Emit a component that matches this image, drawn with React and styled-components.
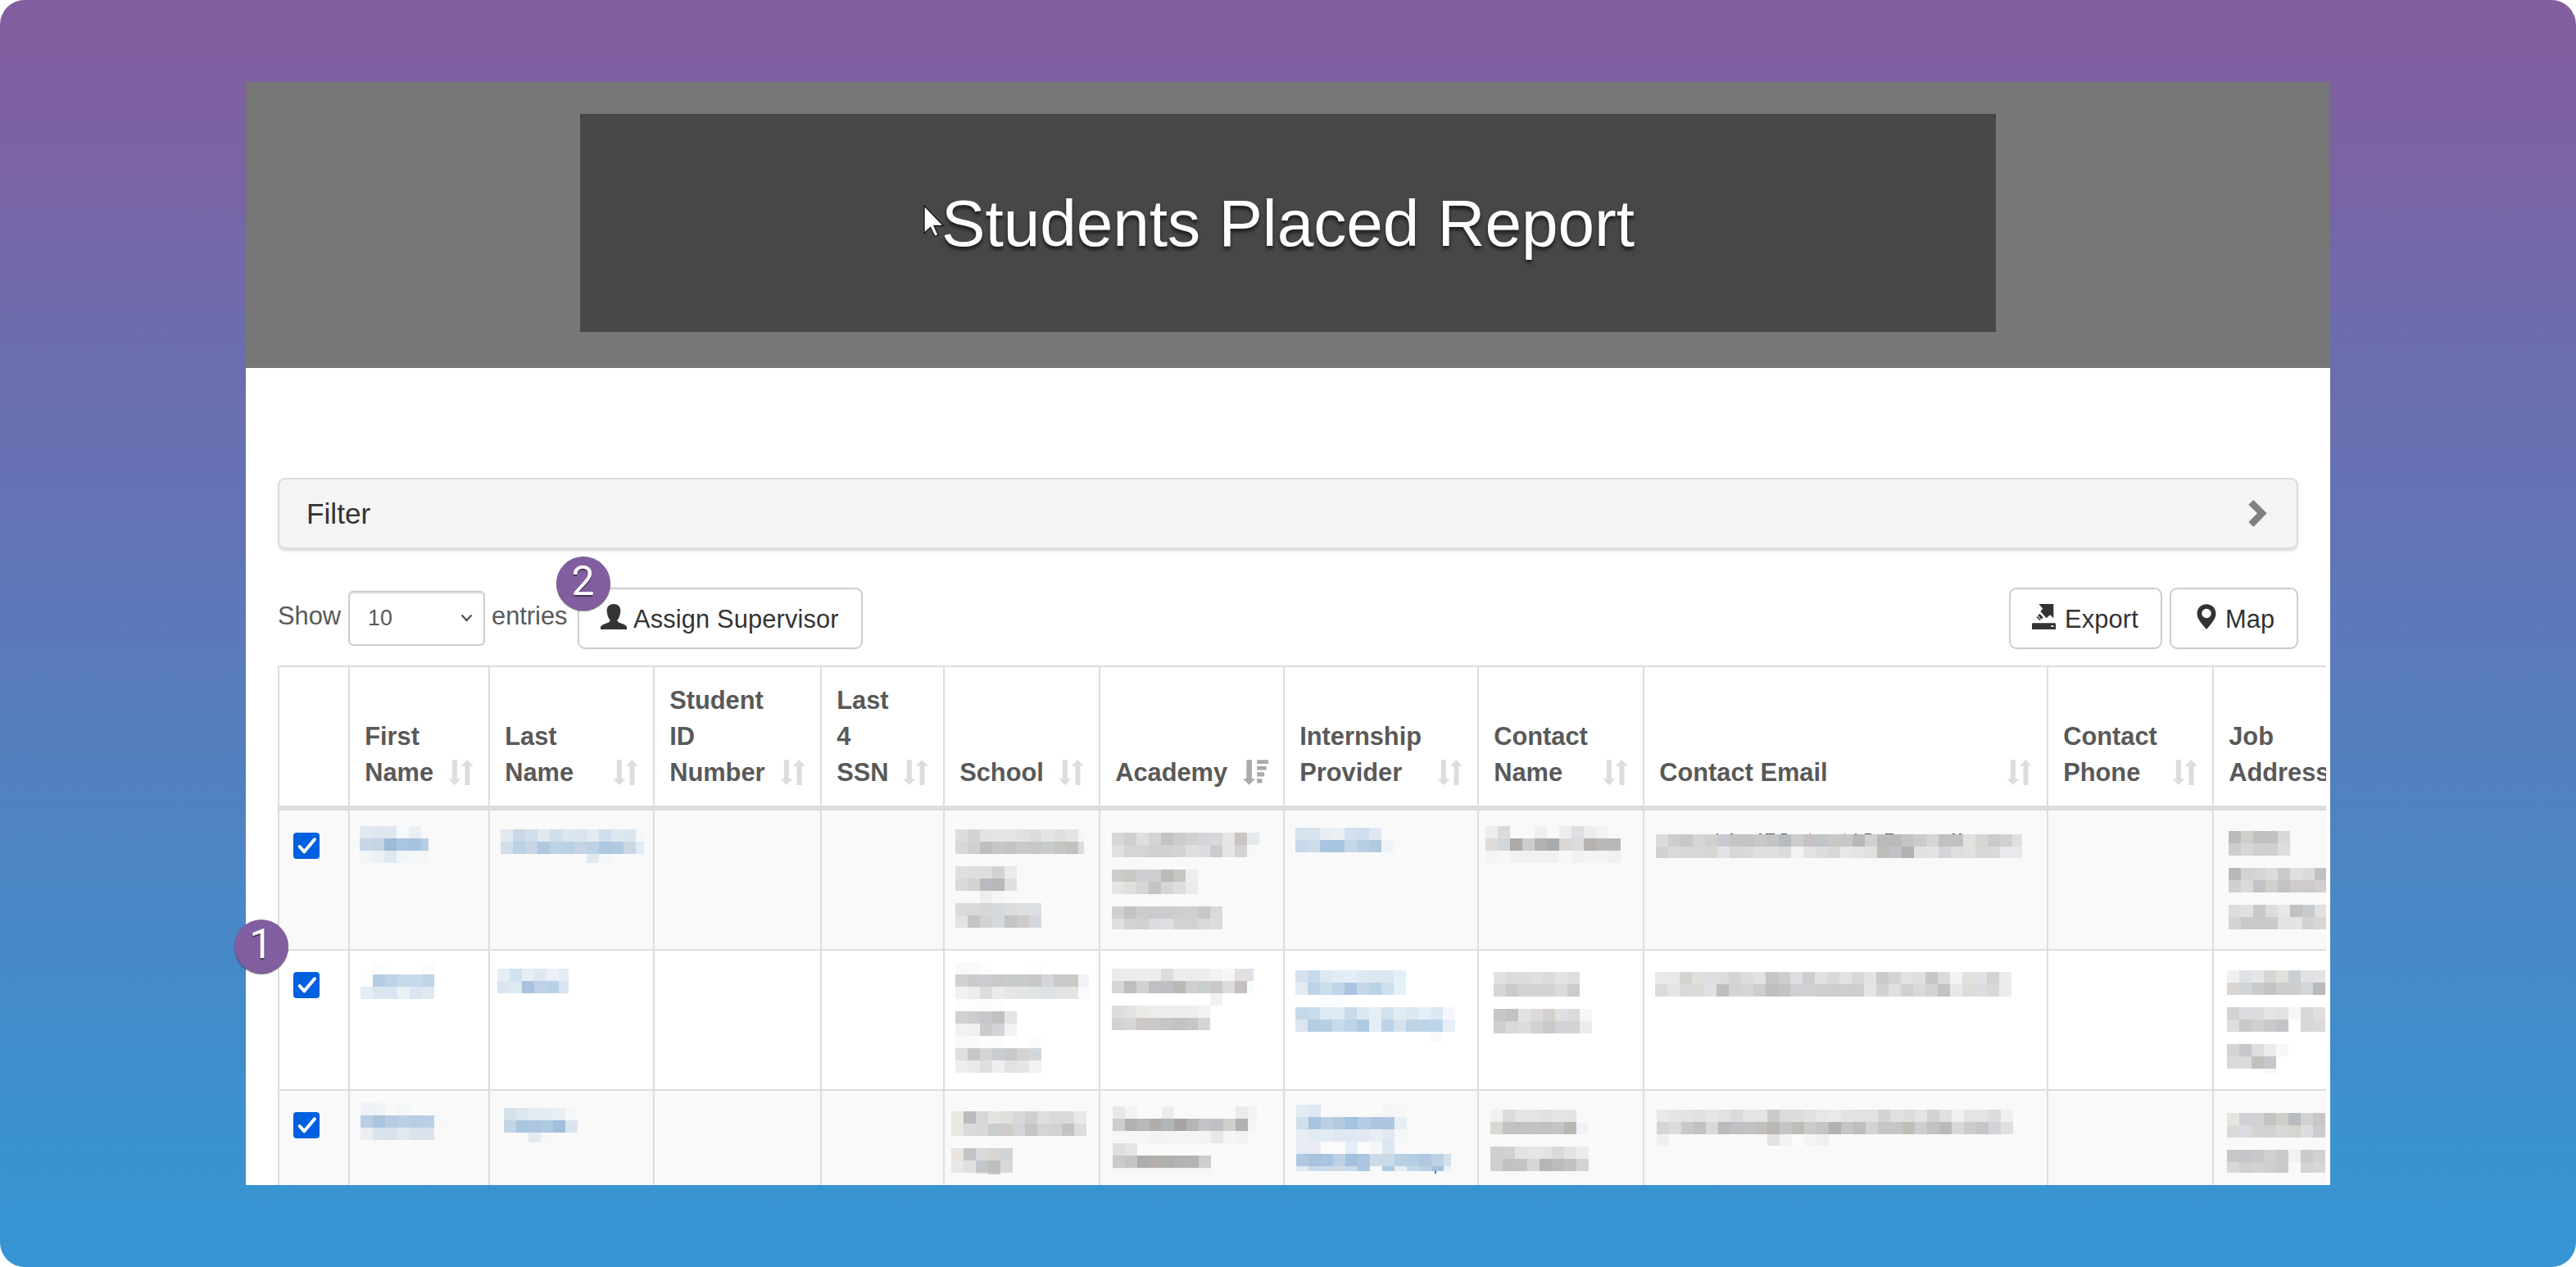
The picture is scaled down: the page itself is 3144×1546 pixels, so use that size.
import React from "react";
import styled, { createGlobalStyle } from "styled-components";

const GlobalStyle = createGlobalStyle`
  * { box-sizing: border-box; }
  body {
    margin: 0;
    background: #fff;
    font-family: "Liberation Sans", Arial, Helvetica, sans-serif;
    font-size: 30.8px;
    line-height: 44px;
    color: #595959;
  }
`;

const Backdrop = styled.div`
  position: relative;
  width: 3144px;
  height: 1546px;
  padding: 100px 300px;
  border-radius: 30px;
  background: linear-gradient(
    #835ea0 0,
    #7b63a4 200px,
    #6b6dae 430px,
    #6672b4 600px,
    #4f83c2 1000px,
    #3a92d0 1400px,
    #3796d4 1546px
  );
`;

const Card = styled.main`
  width: 2544px;
  height: 1346px;
  overflow: hidden;
  background: #fff;
`;

const Banner = styled.header`
  display: flex;
  justify-content: center;
  height: 349px;
  padding-top: 39px;
  background: #777;
`;

const Title = styled.h1`
  display: flex;
  align-items: center;
  justify-content: center;
  width: 1728px;
  height: 266px;
  margin: 0;
  background: #474747;
  color: #fff;
  font-size: 80.1px;
  font-weight: 400;
  line-height: 90px;
  text-shadow: 0 4px 4px rgba(0, 0, 0, 0.6);
`;

const Content = styled.section`
  padding: 134px 0 0 39px;
`;

const FilterPanel = styled.div`
  display: flex;
  align-items: center;
  justify-content: space-between;
  width: 2466px;
  height: 87px;
  padding: 0 36px 0 33px;
  border: 2px solid #ddd;
  border-radius: 9px;
  background: #f4f4f4;
  box-shadow: 0 1px 0 #ddd, 0 3px 3px rgba(0, 0, 0, 0.1);
  color: #333;
  font-size: 35.2px;
`;

const Toolbar = styled.div`
  display: flex;
  align-items: center;
  width: 2466px;
  height: 75px;
  margin: 47px 0 20px;
`;

const Label = styled.span`
  position: relative;
  top: -3px;
  width: ${({ w }) => w}px;
`;

const LengthSelect = styled.div`
  display: flex;
  align-items: center;
  justify-content: space-between;
  width: 167px;
  height: 67px;
  margin-right: 8px;
  padding: 0 13px 1px 22px;
  border: 2px solid #ccc;
  border-radius: 6px;
  box-shadow: inset 0 2px 2px rgba(0, 0, 0, 0.08);
  font-size: 26.8px;
`;

const Button = styled.button`
  display: flex;
  align-items: center;
  width: ${({ w }) => w}px;
  height: 75px;
  margin-left: ${({ ml }) => ml || "0"};
  padding: 2px 0 0 ${({ pl }) => pl}px;
  border: 2px solid #ccc;
  border-radius: 9px;
  background: #fff;
  color: #333;
  font: inherit;
  letter-spacing: 0.15px;
  white-space: nowrap;

  svg {
    margin: -6px ${({ gap }) => gap}px 0 0;
  }
`;

const TableClip = styled.div`
  width: 2500px;
  overflow: hidden;
`;

const Table = styled.table`
  table-layout: fixed;
  width: 2565px;
  border-top: 2px solid #ddd;
  border-left: 2px solid #ddd;
  border-collapse: separate;
  border-spacing: 0;
`;

const Th = styled.th`
  height: 175px;
  padding: 0 18px 18px 18.2px;
  border-right: 2px solid #ddd;
  border-bottom: 6px solid #ddd;
  text-align: left;
  vertical-align: bottom;
  white-space: pre;
`;

const ThInner = styled.div`
  display: flex;
  align-items: flex-end;
  justify-content: space-between;

  svg {
    flex: none;
    margin-bottom: 7px;
  }
`;

const Tr = styled.tr`
  background: #fff;

  &:nth-child(odd) {
    background: #f9f9f9;
  }
`;

const Td = styled.td`
  height: 171px;
  padding: 0;
  border-right: 2px solid #ddd;
  border-bottom: 2px solid #ddd;
  vertical-align: top;
`;

const CheckMark = styled.span`
  display: block;
  width: 32px;
  height: 32px;
  margin: 26px 0 0 17px;
  border-radius: 4px;
  background: #0060df;

  ${Tr}:first-child & {
    margin-top: 27px;
  }

  svg {
    display: block;
  }
`;

const MosaicSvg = styled.svg`
  display: block;
  margin: ${({ $y }) => $y}px 0 0 ${({ $x }) => $x}px;
  overflow: hidden;
`;

const StepBadge = styled.div`
  position: absolute;
  left: ${({ x }) => x}px;
  top: ${({ y }) => y}px;
  width: 66px;
  height: 66px;
  border-radius: 50%;
  background: #805ea0;
  box-shadow: 0 1px 1px rgba(0, 0, 0, 0.5);
  color: #fff;
  font-family: Roboto, "Liberation Sans", sans-serif;
  font-size: 50px;
  line-height: 60px;
  text-align: center;
  text-shadow: 0 2px 1px rgba(0, 0, 0, 0.45);
`;

const Pointer = styled.svg`
  position: absolute;
  left: 1126px;
  top: 249px;
`;

// icons
const ChevronRight = () => (
  <svg width="23" height="33" viewBox="0 0 67 99">
    <path d="M18 0 67 49 18 99 0 81 32 49 0 17z" fill="#808080" />
  </svg>
);

const SelectArrow = () => (
  <svg width="15" height="10" viewBox="0 0 15 10">
    <path d="M1.5 1.5 7.5 8 13.5 1.5" fill="none" stroke="#555" strokeWidth="2.4" />
  </svg>
);

const UserIcon = () => (
  <svg width="32" height="31" viewBox="0 0 96 93">
    <path
      d="M48 0c15 0 25 9 25 24 0 16-6 28-12 36 2 8 10 9 20 13 9 4 15 7 15 13v7H0v-7c0-6 6-9 15-13 10-4 18-5 20-13-6-8-12-20-12-36C23 9 33 0 48 0z"
      fill="#333"
    />
  </svg>
);

const ExportIcon = () => (
  <svg width="29" height="31" viewBox="0 0 87 93">
    <path d="M25 0h54v52L66 40 53 52 31 27 40 17z" fill="#333" />
    <path d="M28 35 41 49 34 56 22 42zM20 45 32 58 29 61 16 48z" fill="#333" />
    <path
      d="M3 70h81q3 0 3 3v20H0V73q0-3 3-3zM70 79v5h9v-5z"
      fill="#333"
      fillRule="evenodd"
    />
  </svg>
);

const MapIcon = () => (
  <svg width="24" height="31" viewBox="0 0 70 92">
    <path
      d="M35 1c20 0 34 15 34 34 0 20-18 38-34 57C19 73 1 55 1 35 1 16 15 1 35 1zm0 16a17 17 0 1 0 0 34 17 17 0 0 0 0-34z"
      fill="#333"
      fillRule="evenodd"
    />
  </svg>
);

const SortIcon = () => (
  <svg width="31" height="31" viewBox="0 0 92 93">
    <path d="M14 0h18v70h14L23 93 0 70h14zM69 0 92 23H79v70H61V23H47z" fill="#ddd" />
  </svg>
);

const SortDescIcon = () => (
  <svg width="31" height="31" viewBox="0 0 94 93">
    <path
      d="M13 0h20v70h13L23 93 0 70h13zM52 0h42v15H52zM52 24h35v14H52zM52 46h27v16H52zM52 70h19v16H52z"
      fill="#aaa"
    />
  </svg>
);

// Columns: width and heading
const columns = [
  { w: 86 },
  { w: 171, title: "First\nName", sort: "both" },
  { w: 201, title: "Last\nName", sort: "both" },
  { w: 204, title: "Student\nID\nNumber", sort: "both" },
  { w: 150, title: "Last\n4\nSSN", sort: "both" },
  { w: 190, title: "School", sort: "both" },
  { w: 225, title: "Academy", sort: "desc" },
  { w: 237, title: "Internship\nProvider", sort: "both" },
  { w: 202, title: "Contact\nName", sort: "both" },
  { w: 493, title: "Contact Email", sort: "both" },
  { w: 202, title: "Contact\nPhone", sort: "both" },
  { w: 202, title: "Job\nAddress", sort: "both" },
];

// Masked values: 15px tiles, one string per tile row, "-" leaves a hole
const rows = [
  [
    { x: 12, y: 19, w: 84, h: 45, t: [
      "e0e8f0 dfe6ef dfe7f0 f6f9fb eaeff3",
      "c8d6e6 c6d5e4 9dbbd9 abc4df a5c3df b6cee3",
      "f4f5f7 eef1f4 e0e8ef f0f3f7 f5f6f8 f4f5f7",
    ] },
    { x: 13, y: 23, w: 175, h: 41, t: [
      "e2e9f1 c9d8e7 cfdeea e2e8f0 cfdfeb dbe6ee dae4ee e4e9f1 cfdeed dde8f0 dae5ee f5f7f9",
      "d3dee8 b9d0e5 c6d4e4 afc9df bcd3e7 bad0e5 c5d3e4 bcd3e6 aec8e1 b1cae1 cad6e4 dfebf5",
      "- - - - - - - e0e8f0 f4f7f9",
    ] },
    null,
    null,
    { x: 13, y: 23, w: 157, h: 120, t: [
      "dddddd d6d4d3 e1e3e4 e4e4e4 e4e4e4 e1e1e1 dcdcdc e2e5e3 dedede e4e5e3 f3f5f6",
      "d8d8d8 d2d0cc bebebe c6c8c7 c2c5c8 c9c9c7 c8c7c5 c9ccce c5c5c3 c3c1bd d7dee3",
      "-",
      "dfdfdf dedede dddddd d2d2d2 ebebeb",
      "dad9d8 d4d3d1 b9bac0 b8b8b8 dfdfdf",
      "- - edefed f4f6f5",
      "dadada d9d9d9 d6d6d4 d3d9de dcdcdc dfdfdf dde0e2",
      "e4e3e2 c5c3c3 d3d3d1 d5d9dc c4c4c4 cecccb d4d8dc",
    ] },
    { x: 14, y: 27, w: 180, h: 118, t: [
      "d8d7d5 cdd0cf dfdfdd d4d4d2 c1c4c7 cecccb d1d1cf d5d6d8 d6d8db e6e6e4 c9c5c2 e5eaed",
      "dfe0e2 d5d5d5 d5d5d5 d1d0ce d1d1d1 d4d4d4 e1dfdd dcdde0 cccccc e5e5e3 d4d2d4 f7f8fa",
      "-",
      "cfcdcb c9c8c5 cdcfd2 cecece bababa c7c5c2 eceef0",
      "e5e5e5 e1dfdc d4d6d8 c4c4c4 d4d5d7 e0dedb e9ebed",
      "-",
      "d2d0ce c3c5c4 cecbca c9cbce cbcdcf cecece d1d0ce c7c7c7 d8d9da",
      "dfdfdf d3d3d1 d1d0ce d9dbde dfdfdf d3d3d1 d2d2d0 d9d9d9 dcdcdc",
    ] },
    { x: 13, y: 21, w: 120, h: 30, t: [
      "d6e2ee d7e4ef e8eef3 ebf0f4 d3e0ed cfdeee e1e7f2 f7f9fa",
      "c6d8e9 cedce9 aac5e0 a8c4de c6d8e6 b9cfe5 b2cae0 eef5fa",
    ] },
    { x: 8, y: 19, w: 165, h: 45, t: [
      "ededeb dadbdd - - efefef - ededed dedfe2 ececec f1f3f3",
      "dfdbd8 d2d6d8 aeaaa7 cccdcf b2b2b2 a6abad d8d7d4 dbdcde b6b2af b8b9bb b7b8ba",
      "f4f4f4 f7f7f7 f1f1f1 f1f1f1 f1f1f1 f1f1f1 f8f8f8 f1f3f3 f2f3f3 f3f3f3 f0f0f0",
    ] },
    { x: 14, y: 28, w: 447, h: 30, top: 1, marks: [
      [74, 2], [91, 3], [126, 3], [134, 11], [153, 7], [188, 1], [230, 1],
      [243, 2], [255, 8], [280, 10], [362, 3], [370, 3],
    ], t: [
      "dbdbd9 cecdcb c7c8cb d6d5d3 d1d0ce c6c9cf c7c5c2 c2c5c3 cac8c6 c4c4c4 b7bbbf cdcdcf c6c2c3 c1c4c8 c8c8c5 c6c8c7 bab7b4 cfd1d0 b9babc b9babc c4c4c4 cecac9 d3d5d7 c1c1c3 c1c1c1 e3e1de d5d5d3 cccac9 d0d2d1 dfe0e2",
      "d3d1cf d9d9d9 d8d8d8 d8d8d8 d6d6d4 e2e3e7 d7d7d5 d9d9d9 dfdfdf dee0df dadcdb f2f2f2 e2e2e2 dbdddf d8d8d8 e7e7e7 e5e4e2 dfdfdf bebdb9 c1c2c6 b2b2b2 e2e1df e2e3e2 d2d4d7 dedede e2e0dd d8d8d8 d9d9d9 e8e9ec e8e8e8",
    ] },
    null,
    { x: 18, y: 25, w: 120, h: 120, t: [
      "bcbbbb d0cecb bfc1c0 c0c2c1 d8d8d8",
      "cecccc d5d7d6 d0d0d0 cfcfcf dcdde0",
      "-",
      "b9b8b6 d3d3d1 d5d5d5 dadddc cbcbcb dfdfdd dbdad8 c0c1c5",
      "d0d0d0 dbdad8 c1c2c5 cfcfcd c1c3c2 cecbca cdcac8 d0d0d2",
      "-",
      "dbdcde e2e1df c8c8c8 dddddd e7e7e7 c2c1bf c8cbcd e1e1e1",
      "d2d3d5 cbcac8 cacbc9 cbcbcb e1e3e5 e6e4e2 d0d1d1 d7d6d4",
    ] },
  ],
  [
    { x: 13, y: 14, w: 90, h: 45, t: [
      "- fafcff - - - fafcff",
      "fdfdfd b5cce4 bdd3e7 c6d9e8 c6daea bed4e7",
      "e4edf4 d9e6f2 dae5f2 ebf0f4 dae5f1 dee9f2",
    ] },
    { x: 9, y: 22, w: 87, h: 30, t: [
      "e5eef5 cfe2ed e5eef5 dfe8f2 eaeff8 e3ebf5",
      "dbe6f1 dfe9f2 a9c3df bed1e6 b9d1e6 d7e4f1",
    ] },
    null,
    null,
    { x: 13, y: 14, w: 163, h: 135, t: [
      "f9f9f9 f9f9f9 fcfefe - - - fdfdfd",
      "d3d1cf cdcaca cbccd0 c9c9c9 c9cccc c8cbc9 c8c9c7 d4d6d9 cac8c8 cccac7 f1f2f5",
      "f2f2f2 efedeb dcdcdc ebebeb e4e7e5 e4e6e4 e1e4e6 dee1e6 e3e3e5 e6e4e3 f9fafd",
      "fdfdfd fdfdfd fbfdfd fdfdfd",
      "d3d2d0 cecccb c7c8cd c0c0c0 e4e4e4",
      "f2f2f2 f0f0ee cbcbcb d3d4d7 f2f2f2",
      "f8f8f8 f9f9f9 fcfcfc fcfcfc - - fafdfc",
      "dfdddd c8c6c4 d5d4d2 c9cdd1 c9c9c9 d5d3d1 d1d6da",
      "eeeeee e9e9e9 dfdfdf efeff2 e2e2e2 e5e5e5 f1f2f4",
    ] },
    { x: 14, y: 22, w: 173, h: 75, t: [
      "edebe9 ebedea ebeeed ebeeed dcdcdc ededed edebe9 ededed f2f2f2 f6f6f6 e2e0de dfe0e6",
      "d8d6d4 bebebe d1d1d1 c0c0c2 bebec4 bab9b8 d0cfcd c8cdce c9c9c7 dedddb c5bfc0 f7fcff",
      "- - - - - - - - f1f1f1",
      "dfdddb e1e2e4 ebe9e6 ededed ededed ededed eeeeec f2f4f3",
      "d3d2d0 d5d6d9 cdc7c5 c8c8ca c5c5c9 c2c2c0 c6c6c6 d5d6d8",
    ] },
    { x: 13, y: 24, w: 195, h: 88, t: [
      "d5e2ed c6daea dce8f2 e2ecf6 e5eef8 dce9f3 dbe7f1 dce7f1 e4f0f7",
      "e2ecf5 bcd3e7 cbdeec bfd5e9 aac5e1 c5d8e9 bad2e6 cedeed e4f2f8",
      "- - fafbfe f8fafd",
      "c6d9e9 c8daeb dde9f3 deeaf6 c9daeb dce9f3 e5eef6 d1e1ed e1ebf4 dbe8f2 e6eef7 dce8f3 f4f8fc",
      "dbe6f2 b4cde5 b6cfe5 c8dbec bdd3e7 afcae3 e4edf6 bdd2e7 d6e3ef bdd4e7 bdd3e6 bcd5e9 e6eff7",
      "- - - - - - - - - - - f8fafd",
    ] },
    { x: 18, y: 26, w: 120, h: 75, t: [
      "e0e1e3 dbdbd9 dddddd dfdfdf dbdbdb e2e4e3 dedede",
      "d6d6d6 cccac8 d2d2d2 d3d3d3 d3d3d3 dbdbd9 cbccce",
      "-",
      "c8c6c6 c2c2c2 e3e4e2 dbdbdb d4cfcc dfdfe4 dadada f5f6f8",
      "d1cfcd d8dad9 dddedc d2d2d0 cac9c7 d2d2d6 d5d3d1 ebecee",
    ] },
    { x: 13, y: 26, w: 435, h: 30, t: [
      "e7e9ea e7e9e8 d3d4d2 e0dfdc dcdee0 dcdedd d6d5d3 dcdcda e0e2e3 c5c5c7 cdcdcf dcdee1 cdcdcd e0e2e1 d7dad9 e3e3e3 d8d8d8 e1e3e2 cacaca d4d4d4 e1e3e2 dde0df c6c6c8 dadada f3f3f1 e1e1df dfe1e4 d2d2d0 ebebeb",
      "dbdbd9 e4e6e5 d8dad9 dbd9d7 dfe1e4 bfbfbf d4d3d1 d6d6d6 cecdcb bebebe c2c3c5 ced0d3 d1d1d1 cecece cfcdcb cecdcb cdcdcd e5e5e3 d2d2d0 dfdfdd ced0d3 d8dad9 d3d3d3 c2c2c2 e7e7e5 dcdcda dcdde0 d8d8d8 ebebeb",
    ] },
    null,
    { x: 16, y: 24, w: 120, h: 126, t: [
      "f2f0ef dfe1e5 e4e5e5 d6d6d4 e2e0dd cccfd1 dfe1e4 e0e2e4",
      "dbd5d2 d1d5d8 cbcbcd c4c4c4 cdcdcb cdcdcb d2d6da b9b9bb",
      "-",
      "d3d2d0 dadcdf dbdbdd e5e5e5 e2e2e2 f5f6f6 d7d7d7 dfdfdf",
      "dedede c9c9cb d1d0ce cacacc c3c4c7 - d7d7d7 d9dadc",
      "-",
      "d5d4d2 c6c7ca dddddd ebebe9 f6f8fa",
      "dadada dadada c1c0bc c5c7c9",
      "- - - f8f8f8",
    ] },
  ],
  [
    { x: 13, y: 15, w: 105, h: 45, t: [
      "eef2f6 eff3f6 - f4f7f7",
      "b9cfe3 a8c4df b7cce2 bad0e4 b6cde3 b9cfe4 f6f8fa",
      "ebeef3 d8e3ee d9e2eb e0e8f0 d7e4ee dae3ed",
    ] },
    { x: 17, y: 21, w: 90, h: 42, t: [
      "d4e1ea dce7f0 e3eaf2 e4ebf3 e9eef2 f6f7f9",
      "c3d4e5 a9c6df afc6df aecae1 a1bedc d9e6f0",
      "- - e4eaf2 f5f8fa",
    ] },
    null,
    null,
    { x: 8, y: 25, w: 165, h: 77, t: [
      "eae6e2 b9bbbe d5d7d9 e4e4e2 e1dfdc d5d7d9 cfcfcf dedede dadada dbdbdb e7e9e8",
      "e9e7e2 d8dadc d8d8d6 cacccb cecbc9 d3d4d7 c5c5c5 d4d4d2 d2d2d2 c4c2bf dcdddf",
      "-",
      "e9e4e0 c3c3c5 d7d9dc d8d4d1 ced3d7",
      "e9e7e3 dfdfdf c3c6ca c0bfbd d7d8da",
      "- - f1eeea cccccc",
    ] },
    { x: 15, y: 19, w: 176, h: 81, t: [
      "e8e8e6 f1f3f5 - - ececec - - - - - ebebeb f0f2f4",
      "cdcdcb b2b2b2 b8b8b8 b1adac b2b6b9 a6a4a5 b6b5b3 c2c4c8 bfc0c3 d1cfcc b0b0b0 f3f5f4",
      "f6f6f6 f6f6f6 f6f6f6 f2f4f3 f2f4f3 f4f4f4 f4f4f4 f2f4f3 e7e9e8 f4f5f5 f2f2f2",
      "dfdfdd e5e5e3",
      "cccac9 c2c4c6 adadad b5afab afafad b3b3b1 b4b4b2 cdcdcd",
      "f4f4f4 f4f4f4 f4f4f4 f4f4f4 f4f4f4 f4f4f4 f4f4f4 f4f4f4",
    ] },
    { x: 14, y: 17, w: 189, h: 84, tail: true, t: [
      "e5ebf4 dee7f2 - - - - - f3f5f8 f5f7f9",
      "cedeeb a8c3df bdd0e3 b3cae1 a5c2df b3cde2 adc6e0 adc7e0 e6eff6",
      "e8edf4 e2eaf3 e4ebf3 dfe8f2 dfe8f2 e1e8f2 e8edf3 e1e8f2 f6f7f9",
      "e7ebf4 e9ecf4 fbfbfb fbfbfb e4ecf4 fbfbfb f4f6f9 dbe6f0",
      "b0c8e0 a7c2de a9c4de bdd1e3 a4c0df abc5df cbdce8 c9dae6 b9cfe2 b6cee3 afc8e0 bfd2e3 d1e2ef",
      "e0eaf2 c8dbe9 cedce8 cedce9 c8dae8 abc8e1 f6f9fc aecae1 e7ecf4 c5d6e5 bcd0e4 a5c1dc f0f3f7",
    ] },
    { x: 14, y: 23, w: 120, h: 75, t: [
      "f3f1ef dadbdd e4e4e4 e4e4e4 e1e1e1 e4e4e4 e4e4e4 f8f9fa",
      "dad8d4 c2c2c2 c1c1c1 c3c3c3 c1c1c1 c4c4c4 b9b7b3 f0f3f6",
      "-",
      "d0d0d0 d1d1d1 e3e3e1 e6e6e6 e3e5e4 dadad8 e4e4e4 ebedec",
      "d1cfcd c2c2c2 c3c3c1 d4d7d6 b5b6b8 bebcba c2c2c2 d4d4d4",
    ] },
    { x: 15, y: 23, w: 435, h: 44, t: [
      "e8e9e9 e6e5e3 e1e3e4 e1e1e1 e6e6e4 e1e2e3 dadbdd e4e4e4 e4e4e4 cacac8 dadcdb dedcdb dfe1e5 e7e7e7 e8e9eb e3e3e1 e2e2e2 e4e2df d4d4d4 e0e0de dddddb e3e5e4 d3d3d3 e0e0e0 f0f0f0 e4e4e4 e4e4e4 dddddd eef0ef",
      "d5d5d3 dbdbdb c9c9c7 c2c1bf d8d8d8 b8babd bfc0c2 c2c2c2 c0bfbd bbb8b6 c2c4c8 c0bdb9 c9cbcd c4c4c2 b3b2b0 c5c6ca bcbec0 d4d3d1 c5c6c8 c4c6c9 c1beba cdced1 c1c1c1 b8babc d7d7d7 cbcbc9 c8c6c5 d1d5d9 e0e0e0",
      "f0f0f0 - - - - - - - - e3e2e0 f1f3f2 fbfbfb f6f4f2 f0f0f0",
    ] },
    null,
    { x: 16, y: 27, w: 120, h: 73, t: [
      "e6e4e1 cfd1d4 d0d2d4 c2c3c3 cecdc9 b9bcbf d0d2d3 c7c7c9",
      "dbdad8 dadce1 d4d4d2 d2d2d0 d8d8d6 d4d4d0 dbdde1 cccccc",
      "-",
      "c8c7c7 c5c6ca c8c8c8 d2d0cc cacaca f1f1f1 cbcbcb d1d1d1",
      "d9d8d6 cecfd1 d3d2d0 cececf cacaca - d3d3d1 d7d7d7",
    ] },
  ],
];

const Mosaic = ({ x, y, w, h, t, top = 0, marks = [], tail }) => (
  <MosaicSvg $x={x} $y={y} width={w} height={h} shapeRendering="crispEdges">
    {t.map((line, r) =>
      line.split(" ").map((color, c) =>
        color === "-" ? null : (
          <rect
            key={`${r}-${c}`}
            x={c * 15}
            y={r * 15 + top}
            width={15}
            height={tail && r === t.length - 1 ? 6 : 15}
            fill={`#${color}`}
          />
        )
      )
    )}
    {marks.map(([mx, mw]) => (
      <rect key={mx} x={mx} y={0} width={mw} height={1} fill="#555" />
    ))}
    {tail && <rect x={169} y={81} width={2} height={3} fill="#337ab7" />}
  </MosaicSvg>
);

const Checked = () => (
  <CheckMark role="checkbox" aria-checked="true">
    <svg width="32" height="32" viewBox="0 0 96 96">
      <path
        d="M23 51 40 70 78 25"
        fill="none"
        stroke="#fff"
        strokeWidth="12"
        strokeLinecap="round"
        strokeLinejoin="round"
      />
    </svg>
  </CheckMark>
);

const StudentsTable = () => (
  <TableClip>
    <Table>
      <colgroup>
        {columns.map(({ w }, i) => (
          <col key={i} width={w} />
        ))}
      </colgroup>
      <thead>
        <tr>
          {columns.map(({ title, sort }, i) => (
            <Th key={i}>
              <ThInner>
                {title}
                {sort === "both" && <SortIcon />}
                {sort === "desc" && <SortDescIcon />}
              </ThInner>
            </Th>
          ))}
        </tr>
      </thead>
      <tbody>
        {rows.map((cells, i) => (
          <Tr key={i}>
            <Td>
              <Checked />
            </Td>
            {cells.map((cell, j) => (
              <Td key={j}>{cell && <Mosaic {...cell} />}</Td>
            ))}
          </Tr>
        ))}
      </tbody>
    </Table>
  </TableClip>
);

const App = () => (
  <>
    <GlobalStyle />
    <Backdrop>
      <Card>
        <Banner>
          <Title>Students Placed Report</Title>
        </Banner>
        <Content>
          <FilterPanel>
            Filter
            <ChevronRight />
          </FilterPanel>
          <Toolbar>
            <Label w={86}>Show</Label>
            <LengthSelect>
              10
              <SelectArrow />
            </LengthSelect>
            <Label w={105}>entries</Label>
            <Button w={348} pl={26} gap={8}>
              <UserIcon />
              Assign Supervisor
            </Button>
            <Button w={187} ml="auto" pl={26} gap={11}>
              <ExportIcon />
              Export
            </Button>
            <Button w={157} ml="9px" pl={31} gap={11}>
              <MapIcon />
              Map
            </Button>
          </Toolbar>
          <StudentsTable />
        </Content>
      </Card>
      <StepBadge x={285.5} y={1122}>1</StepBadge>
      <StepBadge x={678.5} y={679}>2</StepBadge>
      <Pointer width="28" height="42" viewBox="-2 -2 28 42">
        <path
          d="M0 0V33.5L7.5 26.5 13 37.5 17 35.5 12 24.5H23.5z"
          fill="#fff"
          stroke="#111"
          strokeWidth="1.3"
        />
      </Pointer>
    </Backdrop>
  </>
);

export default App;
